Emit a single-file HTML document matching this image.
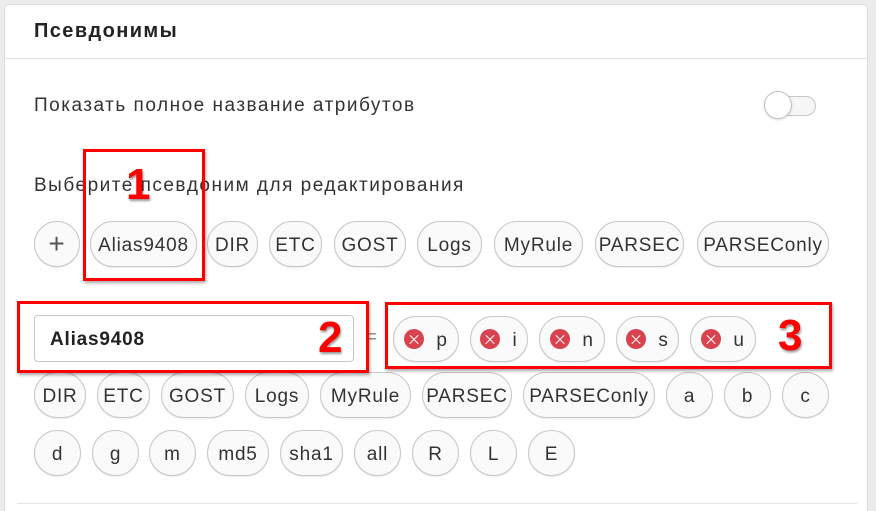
<!DOCTYPE html>
<html><head><meta charset="utf-8"><style>
*{box-sizing:border-box;margin:0;padding:0}
html,body{width:876px;height:511px;overflow:hidden}
body{background:#ececec;font-family:"Liberation Sans","DejaVu Sans",sans-serif;color:#333;position:relative}
.panel{position:absolute;left:4px;top:4px;width:864px;height:520px;background:#fff;border:1px solid #ddd;border-radius:5px}
.hdr{position:absolute;left:4px;top:58px;width:864px;height:1px;background:#e2e2e2}
.t{position:absolute;font-size:19px;white-space:nowrap;letter-spacing:1.5px}
.c{position:absolute;height:46px;border:1px solid #c8c8c8;border-radius:23px;background:#fafafa;display:flex;align-items:center;justify-content:center;font-size:19px;color:#333;box-shadow:0 1px 1px rgba(0,0,0,.08);letter-spacing:.8px;padding-top:3px}
.x{width:20px;height:20px;border-radius:50%;background:#d9434f;position:relative;margin-right:12px;margin-top:-3px}
.x:before,.x:after{content:"";position:absolute;left:4px;top:9.5px;width:12px;height:1.2px;background:#fff;transform:rotate(45deg)}
.x:after{transform:rotate(-45deg)}
.rb{position:absolute;border:3px solid #f00;box-shadow:1px 2px 3px rgba(0,0,0,.35)}
.n{position:absolute;color:#f00;font-weight:bold;font-size:44px;text-shadow:1px 2px 2px rgba(0,0,0,.4)}
</style></head><body>
<div class="panel"></div>
<div class="hdr"></div>
<div class="t" style="left:34px;top:20px;font-weight:bold;font-size:20px;color:#222;letter-spacing:1.4px">Псевдонимы</div>
<div class="t" style="left:34px;top:95px">Показать полное название атрибутов</div>
<div style="position:absolute;left:766px;top:96px;width:50px;height:20px;border:1px solid #c8c8c8;border-radius:10px;background:#f6f6f6"></div>
<div style="position:absolute;left:764px;top:91px;width:28px;height:28px;border:1px solid #c0c0c0;border-radius:50%;background:#fff;box-shadow:0 1px 2px rgba(0,0,0,.15)"></div>
<div class="t" style="left:34px;top:175px">Выберите псевдоним для редактирования</div>

<div class="c" style="left:34px;top:221px;width:46px;font-size:28px;font-weight:300;color:#555;padding-top:0">+</div>
<div class="c" style="left:90px;top:221px;width:107px">Alias9408</div>
<div class="c" style="left:207px;top:221px;width:51px">DIR</div>
<div class="c" style="left:269px;top:221px;width:53px">ETC</div>
<div class="c" style="left:334px;top:221px;width:72px">GOST</div>
<div class="c" style="left:417px;top:221px;width:65px">Logs</div>
<div class="c" style="left:494px;top:221px;width:89px">MyRule</div>
<div class="c" style="left:595px;top:221px;width:89px">PARSEC</div>
<div class="c" style="left:697px;top:221px;width:132px">PARSEConly</div>

<div style="position:absolute;left:34px;top:315px;width:320px;height:47px;border:1px solid #c8c8c8;border-radius:4px;background:#fff"></div>
<div class="t" style="left:50px;top:329px;font-weight:bold;color:#222;letter-spacing:.8px">Alias9408</div>
<div class="t" style="left:366px;top:327px;color:#888">=</div>

<div class="c" style="left:393px;top:316px;width:66px"><span class="x"></span>p</div>
<div class="c" style="left:470px;top:316px;width:58px"><span class="x"></span>i</div>
<div class="c" style="left:539px;top:316px;width:66px"><span class="x"></span>n</div>
<div class="c" style="left:616px;top:316px;width:63px"><span class="x"></span>s</div>
<div class="c" style="left:690px;top:316px;width:66px"><span class="x"></span>u</div>

<div class="c" style="left:34px;top:372px;width:52px">DIR</div>
<div class="c" style="left:97px;top:372px;width:53px">ETC</div>
<div class="c" style="left:161px;top:372px;width:73px">GOST</div>
<div class="c" style="left:245px;top:372px;width:64px">Logs</div>
<div class="c" style="left:320px;top:372px;width:91px">MyRule</div>
<div class="c" style="left:422px;top:372px;width:90px">PARSEC</div>
<div class="c" style="left:523px;top:372px;width:132px">PARSEConly</div>
<div class="c" style="left:666px;top:372px;width:47px">a</div>
<div class="c" style="left:724px;top:372px;width:47px">b</div>
<div class="c" style="left:782px;top:372px;width:47px">c</div>

<div class="c" style="left:34px;top:430px;width:47px">d</div>
<div class="c" style="left:92px;top:430px;width:47px">g</div>
<div class="c" style="left:149px;top:430px;width:47px">m</div>
<div class="c" style="left:207px;top:430px;width:62px">md5</div>
<div class="c" style="left:280px;top:430px;width:63px">sha1</div>
<div class="c" style="left:354px;top:430px;width:47px">all</div>
<div class="c" style="left:412px;top:430px;width:47px">R</div>
<div class="c" style="left:470px;top:430px;width:47px">L</div>
<div class="c" style="left:528px;top:430px;width:47px">E</div>

<div style="position:absolute;left:17px;top:503px;width:840px;height:1px;background:#e2e2e2"></div>

<div class="rb" style="left:83px;top:149px;width:122px;height:132px"></div>
<div class="n" style="left:126px;top:160px">1</div>
<div class="rb" style="left:17px;top:301px;width:352px;height:72px"></div>
<div class="n" style="left:318px;top:313px">2</div>
<div class="rb" style="left:385px;top:302px;width:447px;height:67px"></div>
<div class="n" style="left:778px;top:311px">3</div>
</body></html>
